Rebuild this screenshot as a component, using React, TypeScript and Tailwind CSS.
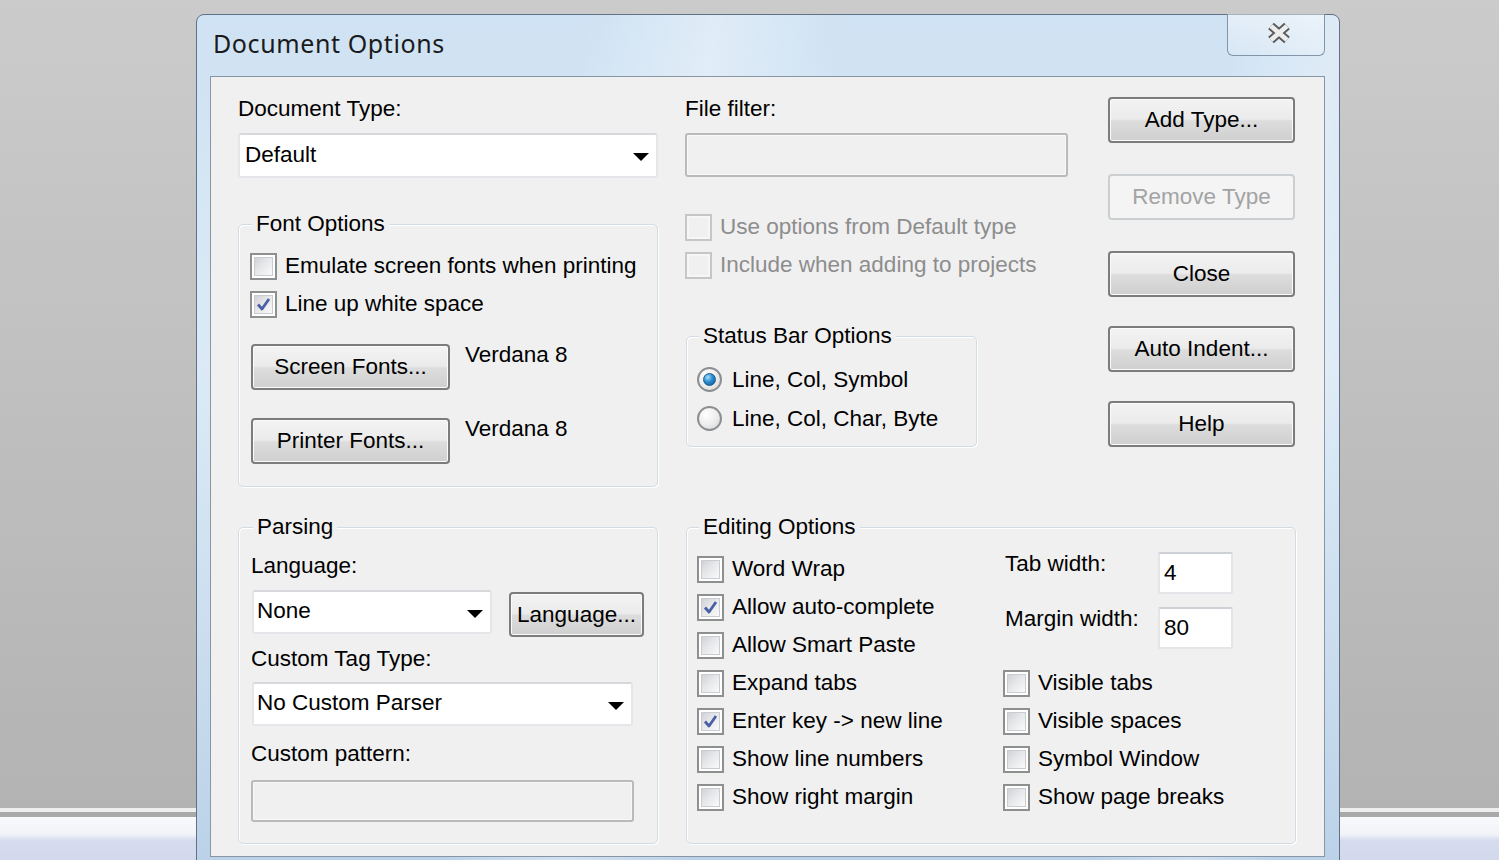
import type { ReactNode } from 'react';

const buttonFace =
  'bg-[linear-gradient(180deg,#f3f3f3_0%,#ebebeb_48%,#dddddd_52%,#cfcfcf_100%)]';

function WinButton({
  children,
  disabled,
  className,
}: {
  children: ReactNode;
  disabled?: boolean;
  className?: string;
}) {
  return (
    <div
      className={`flex flex-none items-center justify-center rounded-[4px] border-2 ${
        disabled
          ? 'border-[#cbcfd2] bg-[#f4f4f4] text-[#a3a3a3]'
          : `border-[#7c7c7c] ${buttonFace} text-black shadow-[inset_0_0_0_1px_#fbfbfb]`
      } ${className ?? ''}`}
    >
      {children}
    </div>
  );
}

function CheckBox({ checked, disabled }: { checked?: boolean; disabled?: boolean }) {
  return (
    <span
      className={`flex h-[27px] w-[27px] flex-none border-2 p-[2px] ${
        disabled ? 'border-[#c6c6c6] bg-[#f6f6f6]' : 'border-[#8e8f8f] bg-white'
      }`}
    >
      <span
        className={`flex h-full w-full items-center justify-center ${
          disabled
            ? 'bg-[#f0f0f0]'
            : 'border border-[#c9ccd0] bg-[linear-gradient(135deg,#cfd2d7_0%,#e6e7e9_45%,#fafafa_100%)]'
        }`}
      >
        {checked ? (
          <svg width="17" height="17" viewBox="0 0 17 17">
            <path
              d="M3 8.5 L7 13 L14 3"
              fill="none"
              stroke="#4a5fa6"
              strokeWidth="2.8"
              strokeLinejoin="round"
            />
          </svg>
        ) : null}
      </span>
    </span>
  );
}

function CheckRow({
  label,
  checked,
  disabled,
}: {
  label: string;
  checked?: boolean;
  disabled?: boolean;
}) {
  return (
    <div className="flex h-[38px] items-center">
      <CheckBox checked={checked} disabled={disabled} />
      <span className={`ml-[8px] whitespace-nowrap ${disabled ? 'text-[#8d8d8d]' : 'text-black'}`}>
        {label}
      </span>
    </div>
  );
}

function RadioRow({ label, checked }: { label: string; checked?: boolean }) {
  return (
    <div className="flex h-[39px] items-center">
      <span className="flex h-[25px] w-[25px] flex-none items-center justify-center rounded-full border-2 border-[#8c8f91] bg-[radial-gradient(circle_at_35%_30%,#ffffff_0%,#ececec_55%,#d2d2d2_100%)]">
        {checked ? (
          <span className="h-[13px] w-[13px] rounded-full border border-[#1c5a8a] bg-[radial-gradient(circle_at_35%_30%,#a6e0ff_0%,#2b8bcf_45%,#125590_100%)]" />
        ) : null}
      </span>
      <span className="ml-[10px] whitespace-nowrap">{label}</span>
    </div>
  );
}

function Arrow() {
  return (
    <svg width="16" height="8" viewBox="0 0 16 8" className="mt-[3px] flex-none">
      <path d="M0 0 H16 L8 8 Z" fill="#000" />
    </svg>
  );
}

function Combo({ value, className }: { value: string; className?: string }) {
  return (
    <div
      className={`flex items-center justify-between rounded-[3px] border-2 border-[#e4e6ea] border-t-[#d6d8dc] bg-white pr-[7px] ${className ?? ''}`}
    >
      <span className="pb-[2px] whitespace-nowrap">{value}</span>
      <Arrow />
    </div>
  );
}

function DisabledInput({ className }: { className?: string }) {
  return (
    <div
      className={`rounded-[3px] border-2 border-[#bababa] bg-[#f0f0f0] shadow-[inset_0_0_0_1px_#f8f8f8] ${className ?? ''}`}
    />
  );
}

function GroupBox({
  title,
  className,
  children,
}: {
  title: string;
  className?: string;
  children: ReactNode;
}) {
  return (
    <fieldset
      className={`rounded-[5px] border border-[#d3dce2] shadow-[inset_1px_1px_0_#ffffff,1px_1px_0_#ffffff] ${className ?? ''}`}
    >
      <legend className="ml-[2px] bg-[#f0f0f0] px-[4px] leading-[26px]">{title}</legend>
      {children}
    </fieldset>
  );
}

export default function App() {
  return (
    <div className="relative h-[860px] w-[1499px] overflow-hidden font-['Liberation_Sans',Arial,sans-serif] text-[22.5px] leading-[26px] text-black">
      {/* desktop */}
      <div className="h-[808px] bg-[linear-gradient(180deg,#cbcbcb_0%,#b3b3b3_100%)]" />
      <div className="h-[4px] bg-[#eeeeee]" />
      <div className="h-[5px] bg-[#a9a9a9]" />
      <div className="h-[43px] bg-[linear-gradient(180deg,#f8f9fb_0%,#f1f3f8_40%,#d6dcee_55%,#d3d9ec_100%)]" />

      {/* dialog window */}
      <div className="absolute left-[196px] top-[14px] flex h-[880px] w-[1144px] flex-col rounded-t-[8px] border border-[#5f7185] bg-[linear-gradient(100deg,rgba(255,255,255,0)_30%,rgba(255,255,255,0.35)_40%,rgba(255,255,255,0)_50%,rgba(255,255,255,0)_80%,rgba(255,255,255,0.3)_88%,rgba(255,255,255,0)_95%),linear-gradient(180deg,#cfe2f3_0%,#dbeaf6_40%,#c9dcee_75%,#b9d0e7_100%)]">
        <div className="flex h-[61px] flex-none items-start justify-between">
          <div className="pl-[16px] pt-[14px] font-['Noto_Sans',sans-serif] text-[25px] leading-[28px] tracking-[0.6px] text-[#1b1b1b]">
            Document Options
          </div>
          <div className="-mt-px mr-[14px] flex h-[42px] w-[98px] items-center justify-center rounded-b-[6px] border border-t-0 border-[#8395a8] bg-[linear-gradient(180deg,rgba(255,255,255,0.45)_0%,rgba(255,255,255,0.15)_100%)]">
            <svg width="28" height="24" viewBox="0 0 28 24" className="ml-[6px] mt-[-3px]">
              <path d="M6 5 L22 19 M22 5 L6 19" stroke="#5b5b5b" strokeWidth="8.5" />
              <path d="M6 5 L22 19 M22 5 L6 19" stroke="#ededed" strokeWidth="4.8" />
            </svg>
          </div>
        </div>

        <div className="ml-[13px] mr-[14px] h-[781px] flex-none border border-[#8795a5] bg-[#f0f0f0] pl-[27px] pt-[19px]">
          {/* top section */}
          <div className="flex items-start">
            {/* column 1 */}
            <div className="w-[420px] flex-none">
              <div>Document Type:</div>
              <Combo value="Default" className="mt-[11px] h-[45px] pl-[5px]" />

              <GroupBox title="Font Options" className="mt-[33px] pb-[22px] pl-[11px] pt-[10px]">
                <CheckRow label="Emulate screen fonts when printing" />
                <CheckRow label="Line up white space" checked />
                <div className="mt-[21px] flex items-start">
                  <WinButton className="ml-[1px] h-[46px] w-[199px]">Screen Fonts...</WinButton>
                  <span className="-mt-[2px] ml-[15px]">Verdana 8</span>
                </div>
                <div className="mt-[28px] flex items-start">
                  <WinButton className="ml-[1px] h-[46px] w-[199px]">Printer Fonts...</WinButton>
                  <span className="-mt-[2px] ml-[15px]">Verdana 8</span>
                </div>
              </GroupBox>
            </div>

            {/* column 2 */}
            <div className="ml-[27px] w-[383px] flex-none">
              <div>File filter:</div>
              <DisabledInput className="mt-[11px] h-[44px]" />
              <div className="mt-[31px]">
                <CheckRow label="Use options from Default type" disabled />
                <CheckRow label="Include when adding to projects" disabled />
              </div>
              <GroupBox
                title="Status Bar Options"
                className="ml-[1px] mt-[39px] w-[291px] pb-[8px] pl-[10px] pt-[11px]"
              >
                <RadioRow label="Line, Col, Symbol" checked />
                <RadioRow label="Line, Col, Char, Byte" />
              </GroupBox>
            </div>

            {/* column 3 */}
            <div className="ml-[40px] flex w-[187px] flex-none flex-col">
              <WinButton className="mt-[1px] h-[46px]">Add Type...</WinButton>
              <WinButton className="mt-[31px] h-[46px]" disabled>
                Remove Type
              </WinButton>
              <WinButton className="mt-[31px] h-[46px]">Close</WinButton>
              <WinButton className="mt-[29px] h-[46px]">Auto Indent...</WinButton>
              <WinButton className="mt-[29px] h-[46px]">Help</WinButton>
            </div>
          </div>

          {/* bottom section */}
          <div className="mt-[27px] flex items-start">
            <GroupBox title="Parsing" className="w-[420px] flex-none pb-[21px] pl-[12px] pt-[13px]">
              <div>Language:</div>
              <div className="flex items-start">
                <Combo value="None" className="ml-[1px] mt-[11px] h-[44px] w-[240px] pl-[3px]" />
                <WinButton className="ml-[17px] mt-[13px] h-[45px] w-[135px] border-[#5f5f5f]">
                  Language...
                </WinButton>
              </div>
              <div className="mt-[9px]">Custom Tag Type:</div>
              <Combo value="No Custom Parser" className="ml-[1px] mt-[10px] h-[44px] w-[381px] pl-[3px]" />
              <div className="mt-[15px]">Custom pattern:</div>
              <DisabledInput className="mt-[13px] h-[42px] w-[383px]" />
            </GroupBox>

            <GroupBox
              title="Editing Options"
              className="ml-[28px] w-[610px] flex-none pb-[27px] pl-[10px] pt-[10px]"
            >
              <div className="flex items-start">
                <div className="w-[306px] flex-none">
                  <CheckRow label="Word Wrap" />
                  <CheckRow label="Allow auto-complete" checked />
                  <CheckRow label="Allow Smart Paste" />
                  <CheckRow label="Expand tabs" />
                  <CheckRow label="Enter key -> new line" checked />
                  <CheckRow label="Show line numbers" />
                  <CheckRow label="Show right margin" />
                </div>
                <div className="flex-none">
                  <div className="mt-[2px] flex items-start">
                    <span className="-mt-[1px] w-[155px] pl-[2px]">Tab width:</span>
                    <div className="flex h-[42px] w-[75px] items-center rounded-[2px] border-2 border-[#e3e5e9] border-t-[#cdd0d5] bg-white pl-[4px]">
                      4
                    </div>
                  </div>
                  <div className="mt-[13px] flex items-start">
                    <span className="-mt-[1px] w-[155px] pl-[2px]">Margin width:</span>
                    <div className="flex h-[42px] w-[75px] items-center rounded-[2px] border-2 border-[#e3e5e9] border-t-[#cdd0d5] bg-white pl-[4px]">
                      80
                    </div>
                  </div>
                  <div className="mt-[15px]">
                    <CheckRow label="Visible tabs" />
                    <CheckRow label="Visible spaces" />
                    <CheckRow label="Symbol Window" />
                    <CheckRow label="Show page breaks" />
                  </div>
                </div>
              </div>
            </GroupBox>
          </div>
        </div>
      </div>
    </div>
  );
}
